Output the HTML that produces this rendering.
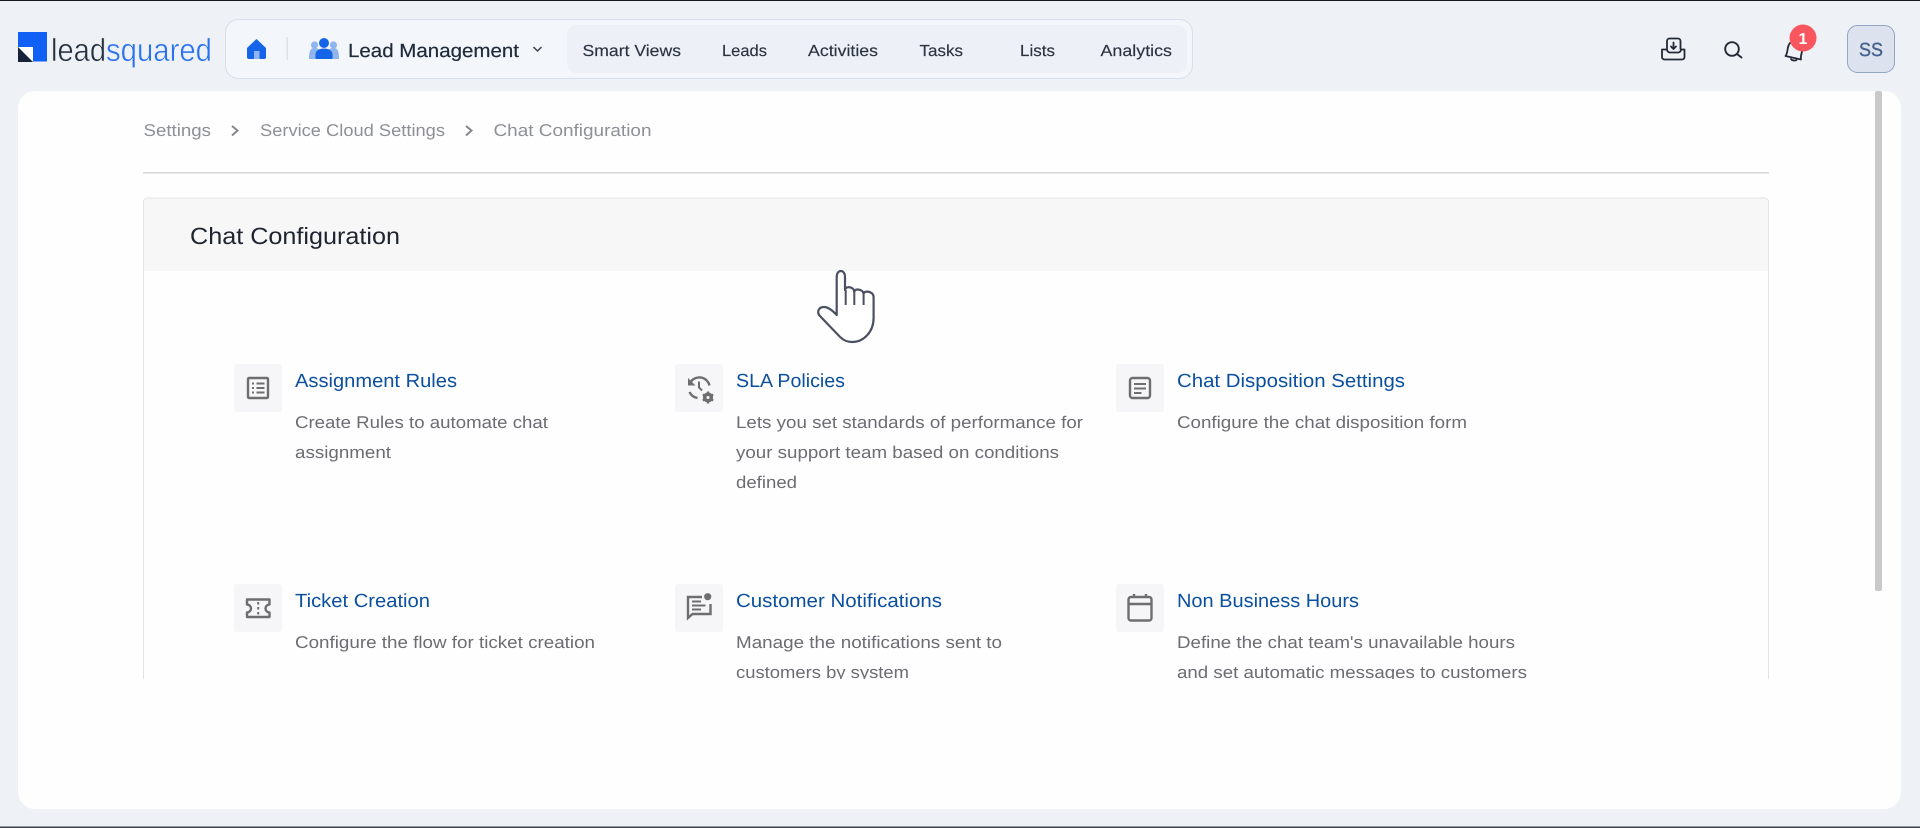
<!DOCTYPE html>
<html lang="en">
<head>
<meta charset="utf-8">
<title>Chat Configuration</title>
<style>
html,body{margin:0;padding:0;width:1920px;height:828px;overflow:hidden;background:#eef1f6}
svg{display:block;position:absolute;left:0;top:0}
text{font-family:"Liberation Sans",Arial,sans-serif;text-rendering:geometricPrecision}
.nav{font-size:16px;fill:#2b3240;stroke:#2b3240;stroke-width:.15}
.bc{font-size:17px;fill:#8e9096}
.tt{font-size:19px;fill:#0b4f9f}
.ds{font-size:17px;fill:#6c6c72}
.box{fill:#f6f6f8}
.ic{fill:none;stroke:#6e6e70;stroke-width:2.4}
</style>
</head>
<body>
<svg width="1920" height="828" viewBox="0 0 1920 828" xmlns="http://www.w3.org/2000/svg">
<defs><clipPath id="cl"><rect x="0" y="91" width="1920" height="588"/></clipPath></defs>
<rect width="1920" height="828" fill="#eef1f6"/>
<rect width="1920" height="1" fill="#15181d"/>
<rect y="826.5" width="1920" height="1.5" fill="#3b404b"/>

<!-- logo -->
<rect x="18" y="32" width="29" height="29.5" fill="#1160f5"/>
<rect x="18" y="47" width="15" height="15" fill="#fff"/>
<path d="M18 47 L33 62 H18 Z" fill="#16233a"/>
<text x="51" y="61" font-size="32" fill="#26303f" stroke="#eef1f6" stroke-width=".5" textLength="55" lengthAdjust="spacingAndGlyphs">lead</text>
<text x="106" y="61" font-size="32" fill="#2a72ee" stroke="#eef1f6" stroke-width=".5" textLength="106" lengthAdjust="spacingAndGlyphs">squared</text>

<!-- nav pill -->
<rect x="225.5" y="19.5" width="967" height="59" rx="13" fill="#f3f6fa" stroke="#d6dfeb"/>
<rect x="567" y="25" width="620" height="48" rx="10" fill="#edf0f6"/>
<path d="M256.5 39 L266 48 V57 a2 2 0 0 1 -2 2 H249 a2 2 0 0 1 -2 -2 V48 Z" fill="#1565e8"/>
<rect x="254" y="51" width="5.5" height="8" fill="#8fb4ef"/>
<rect x="286.5" y="37" width="1.5" height="23" fill="#dbe2ec"/>
<g fill="#8fb5ee">
<circle cx="314.5" cy="45" r="3.6"/><path d="M309 59 c0 -9 2 -11 5.5 -11 c3 0 5 1 6 4 l-3 7 Z"/>
<circle cx="333.5" cy="45" r="3.6"/><path d="M339 59 c0 -9 -2 -11 -5.5 -11 c-3 0 -5 1 -6 4 l3 7 Z"/>
</g>
<circle cx="324" cy="43" r="5" fill="#1565e8"/>
<path d="M315.5 59 v-4 c0 -4 3 -6.5 8.5 -6.5 s8.5 2.5 8.5 6.5 v4 Z" fill="#1565e8"/>
<text x="348" y="57" font-size="19" fill="#1f2a3a" stroke="#1f2a3a" stroke-width=".2" textLength="171" lengthAdjust="spacingAndGlyphs">Lead Management</text>
<path d="M533.5 47 L537.5 51 L541.5 47" fill="none" stroke="#3a4250" stroke-width="1.5"/>

<text class="nav" x="582.5" y="56" textLength="98.5" lengthAdjust="spacingAndGlyphs">Smart Views</text>
<text class="nav" x="722" y="56" textLength="45" lengthAdjust="spacingAndGlyphs">Leads</text>
<text class="nav" x="808" y="56" textLength="70" lengthAdjust="spacingAndGlyphs">Activities</text>
<text class="nav" x="919.5" y="56" textLength="43.5" lengthAdjust="spacingAndGlyphs">Tasks</text>
<text class="nav" x="1020" y="56" textLength="35" lengthAdjust="spacingAndGlyphs">Lists</text>
<text class="nav" x="1100.5" y="56" textLength="71.5" lengthAdjust="spacingAndGlyphs">Analytics</text>

<!-- right icons -->
<g fill="none" stroke="#232a36" stroke-width="1.8" stroke-linejoin="round" stroke-linecap="round">
<path d="M1667 49 V41 a2.5 2.5 0 0 1 2.5 -2.5 H1678 a2.5 2.5 0 0 1 2.5 2.5 V49"/>
<path d="M1662 49.5 H1667 a3 3 0 0 0 3 3 h8 a3 3 0 0 0 3 -3 H1684.5 V57 a2.5 2.5 0 0 1 -2.5 2.5 H1664.5 a2.5 2.5 0 0 1 -2.5 -2.5 Z"/>
<path d="M1673.5 42.5 V48.5 M1671 46.5 L1673.5 49 L1676 46.5"/>
<circle cx="1732" cy="49" r="6.8" stroke-width="1.9"/>
<path d="M1737 54 L1741.5 57.5" stroke-width="1.9"/>
<path d="M1790 43 C1786.5 47 1788.5 52 1785.5 56 L1801 59.5 C1800 55 1803.5 51 1802 46"/>
<path d="M1791 59 C1791.5 60.5 1795 61 1796.5 60"/>
</g>
<circle cx="1803" cy="38" r="13.5" fill="#f9565f"/>
<text x="1803" y="44" font-size="16" font-weight="700" fill="#fff" text-anchor="middle">1</text>
<rect x="1847.5" y="25.5" width="47" height="47" rx="10" fill="#dce3ee" stroke="#93a6c5"/>
<text x="1859" y="56" font-size="19" fill="#46638f" stroke="#46638f" stroke-width=".4" textLength="24" lengthAdjust="spacingAndGlyphs">SS</text>

<!-- card -->
<rect x="18" y="91" width="1883" height="718" rx="17" fill="#fefefe"/>
<rect x="1875" y="91" width="7" height="500" rx="2" fill="#c9c9c9"/>

<!-- breadcrumbs -->
<text class="bc" x="143.5" y="136" textLength="67.5" lengthAdjust="spacingAndGlyphs">Settings</text>
<path d="M232 126 L237.5 130.5 L232 135.5" fill="none" stroke="#85878c" stroke-width="2"/>
<text class="bc" x="260" y="136" textLength="185" lengthAdjust="spacingAndGlyphs">Service Cloud Settings</text>
<path d="M466 126 L471.5 130.5 L466 135.5" fill="none" stroke="#85878c" stroke-width="2"/>
<text class="bc" x="493.5" y="136" textLength="158" lengthAdjust="spacingAndGlyphs">Chat Configuration</text>
<rect x="143" y="172" width="1626" height="1.5" fill="#d6d6d6"/>

<!-- panel -->
<g clip-path="url(#cl)">
<path d="M143.5 682 V202 a4 4 0 0 1 4 -4 H1764.5 a4 4 0 0 1 4 4 V682" fill="#fefefe" stroke="#e3e3e3"/>
<path d="M144 271 V202 a3.5 3.5 0 0 1 3.5 -3.5 H1764.5 a3.5 3.5 0 0 1 3.5 3.5 V271 Z" fill="#f7f7f8"/>
<text x="190" y="244" font-size="23.5" fill="#1e2430" textLength="210" lengthAdjust="spacingAndGlyphs">Chat Configuration</text>

<!-- hand cursor -->
<path d="M836.7 315 V277 c0 -8 8.3 -8 8.3 0 V290 c0 -4 9 -4 9.3 2 c0 -4 9 -3 9.3 2 c0 -4 10 -3 10 3 V318 c0 14 -10 24 -21.5 24 c-4 0 -8 -1 -12 -5 L819 315 c-2 -4 0 -8 5 -8 c4 0 9 4 12.7 8 Z" fill="#fff" stroke="#4a5062" stroke-width="2.2" stroke-linejoin="round"/>
<path d="M845.7 290 V305 M854.3 292 V305 M863.6 294 V305" fill="none" stroke="#4a5062" stroke-width="2"/>

<!-- item 1 -->
<rect class="box" x="234" y="364" width="48" height="48" rx="3"/>
<rect class="ic" x="248" y="378" width="20" height="20" rx="1"/>
<path d="M252 383.5 h2 M252 388 h2 M252 392.5 h2 M256.5 383.5 h8 M256.5 388 h8 M256.5 392.5 h8" class="ic" style="stroke-width:2"/>
<text class="tt" x="295" y="387" textLength="162" lengthAdjust="spacingAndGlyphs">Assignment Rules</text>
<text class="ds" x="295" y="428" textLength="253" lengthAdjust="spacingAndGlyphs">Create Rules to automate chat</text>
<text class="ds" x="295" y="458" textLength="96" lengthAdjust="spacingAndGlyphs">assignment</text>

<!-- item 2 -->
<rect class="box" x="675" y="364" width="48" height="48" rx="3"/>
<path class="ic" d="M690 383 a10.5 10.5 0 0 1 19.5 2.5 M689.5 392 a10.5 10.5 0 0 0 8 6"/>
<path d="M688 378 v7.5 h7.5 Z" fill="#6e6e70"/>
<path class="ic" d="M699 381.5 v6 l3 3" style="stroke-width:2"/>
<circle cx="708" cy="397.5" r="3.5" fill="none" stroke="#6e6e70" stroke-width="3.2"/>
<path d="M708 391.5 v12 M702.8 394.5 l10.4 6 M702.8 400.5 l10.4 -6" stroke="#6e6e70" stroke-width="2.2"/>
<circle cx="708" cy="397.5" r="1.5" fill="#f6f6f8"/>
<text class="tt" x="736" y="387" textLength="109" lengthAdjust="spacingAndGlyphs">SLA Policies</text>
<text class="ds" x="736" y="428" textLength="347" lengthAdjust="spacingAndGlyphs">Lets you set standards of performance for</text>
<text class="ds" x="736" y="458" textLength="323" lengthAdjust="spacingAndGlyphs">your support team based on conditions</text>
<text class="ds" x="736" y="488" textLength="61" lengthAdjust="spacingAndGlyphs">defined</text>

<!-- item 3 -->
<rect class="box" x="1116" y="364" width="48" height="48" rx="3"/>
<rect class="ic" x="1130" y="378" width="20" height="20" rx="2.5"/>
<path class="ic" d="M1134 384 h12 M1134 388.5 h12 M1134 393 h7.5" style="stroke-width:2"/>
<text class="tt" x="1177" y="387" textLength="228" lengthAdjust="spacingAndGlyphs">Chat Disposition Settings</text>
<text class="ds" x="1177" y="428" textLength="290" lengthAdjust="spacingAndGlyphs">Configure the chat disposition form</text>

<!-- item 4 -->
<rect class="box" x="234" y="584" width="48" height="48" rx="3"/>
<path class="ic" d="M247 599.5 H269.5 V604.5 a3.5 3.5 0 0 0 0 8 V617 H247 V612.5 a3.5 3.5 0 0 0 0 -8 Z" stroke-linejoin="round"/>
<path class="ic" d="M258.2 602 v2.5 M258.2 607 v2.5 M258.2 612 v2.5" style="stroke-width:2"/>
<text class="tt" x="295" y="607" textLength="135" lengthAdjust="spacingAndGlyphs">Ticket Creation</text>
<text class="ds" x="295" y="648" textLength="300" lengthAdjust="spacingAndGlyphs">Configure the flow for ticket creation</text>

<!-- item 5 -->
<rect class="box" x="675" y="584" width="48" height="48" rx="3"/>
<path class="ic" d="M702 597 H688 V618 L692.5 614 H710.5 V604"/>
<circle cx="707.7" cy="596.7" r="3.6" fill="#6e6e70"/>
<path class="ic" d="M692 601.5 h9 M692 605.5 h13.5 M692 609.5 h9" style="stroke-width:2"/>
<text class="tt" x="736" y="607" textLength="206" lengthAdjust="spacingAndGlyphs">Customer Notifications</text>
<text class="ds" x="736" y="648" textLength="266" lengthAdjust="spacingAndGlyphs">Manage the notifications sent to</text>
<text class="ds" x="736" y="678" textLength="173" lengthAdjust="spacingAndGlyphs">customers by system</text>

<!-- item 6 -->
<rect class="box" x="1116" y="584" width="48" height="48" rx="3"/>
<rect class="ic" x="1128.5" y="597" width="23" height="23.5" rx="2.5"/>
<path class="ic" d="M1128.5 604 h23 M1134 594 v3 M1146 594 v3"/>
<text class="tt" x="1177" y="607" textLength="182" lengthAdjust="spacingAndGlyphs">Non Business Hours</text>
<text class="ds" x="1177" y="648" textLength="338" lengthAdjust="spacingAndGlyphs">Define the chat team's unavailable hours</text>
<text class="ds" x="1177" y="678" textLength="350" lengthAdjust="spacingAndGlyphs">and set automatic messages to customers</text>
</g>
</svg>
</body>
</html>
